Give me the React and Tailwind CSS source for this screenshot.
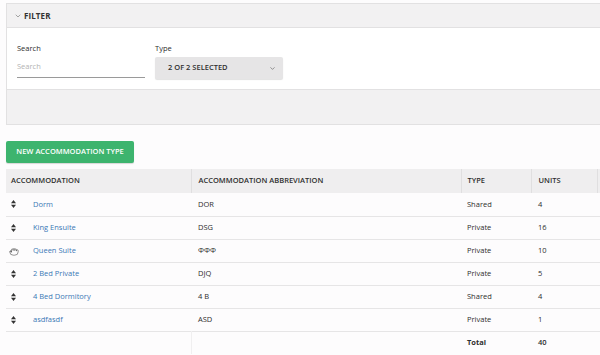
import { ChevronDown, Grab } from 'lucide-react';

const rows = [
  { name: 'Dorm', abbr: 'DOR', type: 'Shared', units: 4 },
  { name: 'King Ensuite', abbr: 'DSG', type: 'Private', units: 16 },
  { name: 'Queen Suite', abbr: 'ΦΦΦ', type: 'Private', units: 10, cursor: true },
  { name: '2 Bed Private', abbr: 'DJQ', type: 'Private', units: 5 },
  { name: '4 Bed Dormitory', abbr: '4 B', type: 'Shared', units: 4 },
  { name: 'asdfasdf', abbr: 'ASD', type: 'Private', units: 1 },
];

const SortIcon = () => (
  <svg width="5" height="8" viewBox="0 0 5 8" className="text-[#333]">
    <path d="M2.5 0 L5 3.2 L0 3.2 Z" fill="currentColor" />
    <path d="M2.5 8 L5 4.8 L0 4.8 Z" fill="currentColor" />
  </svg>
);

const App = () => {
  return (
    <div
      className="w-[600px] h-[355px] overflow-hidden bg-[#fdfcfd] text-[#2e2e2e] text-[7.5px]"
      style={{ fontFamily: '"Open Sans", "Liberation Sans", sans-serif' }}
    >
      <div className="w-[690px] pl-[6px] pt-[3px]">
        {/* filter panel */}
        <div className="border border-r-0 border-[#e2e1e2]">
          <div className="h-[24px] bg-[#f2f1f2] border-b border-[#e2e1e2] flex items-center pl-[7px] gap-[2px]">
            <ChevronDown size={8} strokeWidth={1.5} className="text-[#555]" />
            <span className="text-[8px] font-bold text-[#333] tracking-[0.1px]">FILTER</span>
          </div>
          <div className="h-[61px] bg-white flex gap-[10px] pl-[10px] pt-[15px]">
            <div className="w-[128px]">
              <div className="leading-[10px]">Search</div>
              <div className="mt-[4px] h-[21px] border-b-[1.5px] border-[#9a9a9a] flex items-center text-[#b3b3b3]">
                Search
              </div>
            </div>
            <div className="w-[128px]">
              <div className="leading-[10px]">Type</div>
              <div className="mt-[4px] h-[22px] bg-[#e6e5e6] rounded-[2px] shadow-[0_1px_1px_rgba(0,0,0,0.12)] flex items-center justify-between pl-[13px] pr-[7px]">
                <span className="font-semibold">2 OF 2 SELECTED</span>
                <ChevronDown size={7} strokeWidth={1.8} className="text-[#444]" />
              </div>
            </div>
          </div>
          <div className="h-[35px] bg-[#f2f1f2] border-t border-[#e2e1e2]" />
        </div>

        <div className="mt-[16px] h-[22px] w-[128px] bg-[#3db46e] rounded-[2px] shadow-[0_1px_1px_rgba(0,0,0,0.15)] flex items-center justify-center text-white font-semibold">
          NEW ACCOMMODATION TYPE
        </div>

        {/* table */}
        <table className="mt-[6px] w-full border-collapse text-left">
          <thead>
            <tr className="bg-[#efeeef] h-[24px] font-semibold">
              <th className="w-[185px] pl-[5px] font-semibold">ACCOMMODATION</th>
              <th className="w-[270px] pl-[7px] border-l border-[#e0dfe0] font-semibold">ACCOMMODATION ABBREVIATION</th>
              <th className="w-[70px] pl-[6px] border-l border-[#e0dfe0] font-semibold">TYPE</th>
              <th className="w-[66px] pl-[7px] border-l border-[#e0dfe0] font-semibold">UNITS</th>
              <th className="border-l border-[#e0dfe0]"></th>
            </tr>
          </thead>
          <tbody>
            {rows.map(r => (
              <tr key={r.name} className="h-[23px] border-b-[1.5px] border-[#e6e5e6]">
                <td className="pl-[5px]">
                  <div className="flex items-center">
                    <div className="w-[22px] flex items-center">
                      {r.cursor ? (
                        <Grab size={10} strokeWidth={1.5} className="text-[#555] -ml-[2px]" />
                      ) : (
                        <SortIcon />
                      )}
                    </div>
                    <span className="text-[#3a78b5]">{r.name}</span>
                  </div>
                </td>
                <td className="pl-[7px]">{r.abbr}</td>
                <td className="pl-[6px]">{r.type}</td>
                <td className="pl-[7px]">{r.units}</td>
                <td></td>
              </tr>
            ))}
            <tr className="h-[23px]">
              <td></td>
              <td className="border-l border-[#f0eff0]"></td>
              <td className="pl-[6px] font-bold">Total</td>
              <td className="pl-[7px] font-semibold">40</td>
              <td></td>
            </tr>
          </tbody>
        </table>
      </div>
    </div>
  );
};

export default App;
